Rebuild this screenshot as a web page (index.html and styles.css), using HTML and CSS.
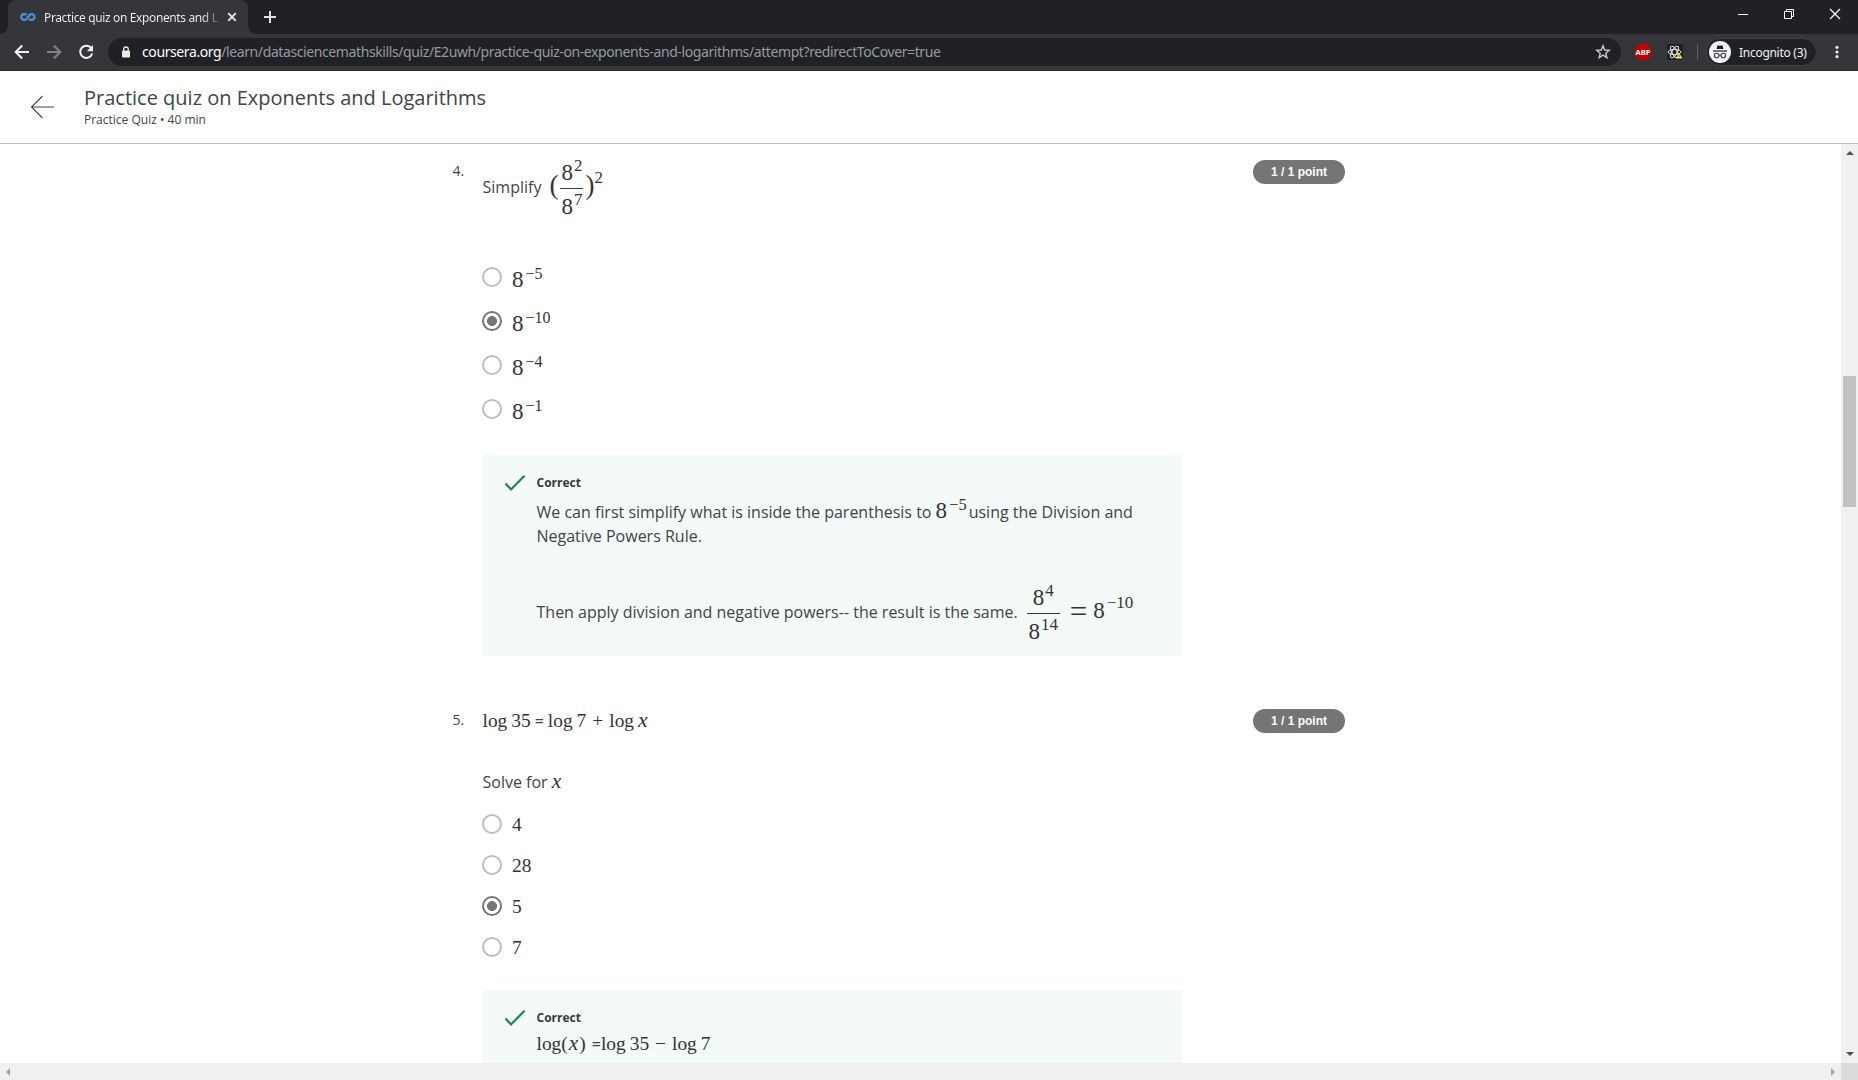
FILE: index.html
```html
<!DOCTYPE html>
<html lang="en">
<head>
<meta charset="utf-8">
<title>Practice quiz on Exponents and Logarithms</title>
<link rel="stylesheet" href="styles.css">
</head>
<body>
<div class="tabstrip">
  <div class="tab">
    <svg class="favicon" width="16" height="10" viewBox="0 0 16 10"><path d="M6.500 3A3 3 0 1 0 6.500 7L9.300 3.200A2.900 2.900 0 1 1 9.200 6.700" fill="none" stroke="#4a90d0" stroke-width="2.400"/></svg>
    <span class="tab-title">Practice quiz on Exponents and L</span>
    <svg class="tab-close" width="10" height="10" viewBox="0 0 10 10"><path d="M1.2 1.2l7.6 7.6M8.8 1.2L1.2 8.8" stroke="#e8eaed" stroke-width="1.8"/></svg>
  </div>
  <svg class="new-tab" width="14" height="14" viewBox="0 0 14 14"><path d="M7 1v12M1 7h12" stroke="#dfe1e5" stroke-width="2"/></svg>
  <div class="window-controls">
    <svg width="12" height="12" viewBox="0 0 12 12"><path d="M1 6.5h10" stroke="#fff"/></svg>
    <svg width="12" height="12" viewBox="0 0 12 12"><path d="M1.5 3.5h7v7h-7zM3.5 3.500v-2h7v7h-2" fill="none" stroke="#fff"/></svg>
    <svg width="12" height="12" viewBox="0 0 12 12"><path d="M1 1l10 10M11 1L1 11" stroke="#fff" stroke-width="1.2"/></svg>
  </div>
</div>
<div class="toolbar">
  <div class="nav">
    <svg width="16" height="16" viewBox="0 0 16 16"><path d="M15 8H2M8.200 1.500L1.700 8l6.500 6.500" fill="none" stroke="#f1f3f4" stroke-width="2"/></svg>
    <svg width="16" height="16" viewBox="0 0 16 16"><path d="M1 8h13M7.800 1.500L14.300 8l-6.500 6.500" fill="none" stroke="#838488" stroke-width="2"/></svg>
    <svg width="16" height="16" viewBox="0 0 16 16"><path d="M13.300 4.200A6.100 6.100 0 1 0 14.200 9.500" fill="none" stroke="#f1f3f4" stroke-width="2"/><path d="M15 1v6.200H8.800z" fill="#f1f3f4"/></svg>
  </div>
  <div class="omnibox">
    <svg width="10" height="12" viewBox="0 0 10 12"><rect x="1" y="4.500" width="8" height="7" rx="1" fill="#e8eaed"/><path d="M2.700 5V3.300a2.300 2.300 0 0 1 4.600 0V5" fill="none" stroke="#e8eaed" stroke-width="1.300"/></svg>
    <span class="url"><span class="host">coursera.org</span><span class="path">/learn/datasciencemathskills/quiz/E2uwh/practice-quiz-on-exponents-and-logarithms/attempt?redirectToCover=true</span></span>
    <svg class="star" width="16" height="16" viewBox="0 0 16 16"><path d="M8 1.700l1.700 4.300 4.600.3-3.500 2.900 1.100 4.500L8 11.200l-3.900 2.500 1.100-4.500L1.700 6.300l4.600-.3z" fill="none" stroke="#c6c8cb" stroke-width="1.400"/></svg>
  </div>
  <div class="abp"><span>ABP</span></div>
  <svg class="react" width="16" height="16" viewBox="0 0 16 16"><path d="M0 0h16v16H0z" fill="#202124"/><g fill="none" stroke="#e8e8e8"><ellipse cx="7.500" cy="8" rx="6.500" ry="2.500"/><ellipse cx="7.500" cy="8" rx="6.500" ry="2.500" transform="rotate(60 7.500 8)"/><ellipse cx="7.500" cy="8" rx="6.500" ry="2.500" transform="rotate(120 7.500 8)"/></g><path d="M12 8.500l3.500 6h-6.500z" fill="#f6e94b"/><path d="M12.200 10.800v2.200" stroke="#554d00" stroke-width=".8"/></svg>
  <div class="divider"></div>
  <div class="incognito">
    <svg width="22" height="22" viewBox="0 0 22 22"><circle cx="11" cy="11" r="11" fill="#f1f3f4"/><path d="M7.500 8l1.100-3.700 2.400.4 2.400-.4L14.500 8z" fill="#202124"/><path d="M4 10h14" stroke="#202124" stroke-width="1.200"/><g fill="none" stroke="#3c4043" stroke-width="1.100"><circle cx="7.700" cy="14.500" r="2.300"/><circle cx="14.300" cy="14.500" r="2.300"/><path d="M10 14.200h2"/></g></svg>
    <span>Incognito (3)</span>
  </div>
  <svg class="menu" width="4" height="14" viewBox="0 0 4 14"><g fill="#e8eaed"><circle cx="2" cy="2.300" r="1.600"/><circle cx="2" cy="7" r="1.600"/><circle cx="2" cy="11.700" r="1.600"/></g></svg>
</div>
<header class="quiz-header">
  <svg width="25" height="24" viewBox="0 0 25 24"><path d="M24 12H1.500M12.500 1L1.500 12l11 11" fill="none" stroke="#444" stroke-width="1.100"/></svg>
  <div>
    <h1>Practice quiz on Exponents and Logarithms</h1>
    <p>Practice Quiz • 40 min</p>
  </div>
</header>
<div class="viewport">
  <main>
    <section class="question q4">
      <div class="number">4.</div>
      <div class="body">
        <p class="prompt"><span class="word-simplify">Simplify</span><span class="m paren">(</span><span class="m frac"><span class="num">8<sup>2</sup></span><span class="den">8<sup>7</sup></span></span><span class="m paren close">)</span><span class="m big"><sup>2</sup></span></p>
        <div class="options powers">
          <div class="option"><i class="radio"></i><span class="m big">8<sup>−5</sup></span></div>
          <div class="option"><i class="radio on"></i><span class="m big">8<sup>−10</sup></span></div>
          <div class="option"><i class="radio"></i><span class="m big">8<sup>−4</sup></span></div>
          <div class="option"><i class="radio"></i><span class="m big">8<sup>−1</sup></span></div>
        </div>
        <div class="feedback">
          <svg width="22" height="18" viewBox="0 0 22 18"><path d="M1.500 9.500l5.500 6L20.500 1.800" fill="none" stroke="#1f8354" stroke-width="2.200"/></svg>
          <div class="explain">
            <h2>Correct</h2>
            <p class="line1"><span class="lead">We can first simplify what is inside the parenthesis to </span><span class="m big inline">8<sup>−5</sup></span><span class="tail">using the Division and</span><br>Negative Powers Rule.</p>
            <p class="line2"><span class="lead2">Then apply division and negative powers-- the result is the same.</span><span class="m frac wide"><span class="num">8<sup>4</sup></span><span class="den">8<sup>14</sup></span></span><span class="m equals">=</span><span class="m big result">8<sup>−10</sup></span></p>
          </div>
        </div>
      </div>
      <div class="points">1 / 1 point</div>
    </section>
    <section class="question q5">
      <div class="number">5.</div>
      <div class="body">
        <p class="equation"><span class="m">log<span class="thin">35</span></span><span class="eq">=</span><span class="m">log<span class="thin">7</span><span class="op plus">+</span>log<em>x</em></span></p>
        <p class="solve">Solve for <span class="m"><em class="bare">x</em></span></p>
        <div class="options">
          <div class="option"><i class="radio"></i><span class="m">4</span></div>
          <div class="option"><i class="radio"></i><span class="m">28</span></div>
          <div class="option"><i class="radio on"></i><span class="m">5</span></div>
          <div class="option"><i class="radio"></i><span class="m">7</span></div>
        </div>
        <div class="feedback">
          <svg width="22" height="18" viewBox="0 0 22 18"><path d="M1.500 9.500l5.500 6L20.500 1.800" fill="none" stroke="#1f8354" stroke-width="2.200"/></svg>
          <div class="explain">
            <h2>Correct</h2>
            <p class="logline"><span class="m">log(<em class="arg">x</em>)</span><span class="eq tight">=</span><span class="m">log<span class="thin">35</span><span class="op">−</span>log<span class="thin">7</span></span></p>
          </div>
        </div>
      </div>
      <div class="points">1 / 1 point</div>
    </section>
  </main>
  <div class="vscroll">
    <svg width="8" height="4" viewBox="0 0 8 4"><path d="M0 4l4-4 4 4z" fill="#505050"/></svg>
    <div class="thumb"></div>
    <svg width="8" height="4" viewBox="0 0 8 4"><path d="M0 0h8L4 4z" fill="#505050"/></svg>
  </div>
</div>
<div class="hscroll">
  <svg width="4" height="8" viewBox="0 0 4 8"><path d="M4 0v8L0 4z" fill="#a3a3a3"/></svg>
  <svg width="4" height="8" viewBox="0 0 4 8"><path d="M0 0v8l4-4z" fill="#a3a3a3"/></svg>
  <div class="corner"></div>
</div>
</body>
</html>
```
FILE: styles.css
```css
* { box-sizing: border-box; }
body {
  margin: 0;
  width: 1858px;
  height: 1080px;
  overflow: hidden;
  display: flex;
  flex-direction: column;
  background: #fff;
  color: #414446;
  font-family: "Open Sans", "Noto Sans", sans-serif;
}
h1, h2, p { margin: 0; font-weight: 400; }
svg { display: block; flex: none; }

/* Browser tab strip */
.tabstrip {
  flex: none;
  height: 34px;
  background: #202124;
  display: flex;
  align-items: center;
  padding-left: 8px;
}
.tab {
  position: relative;
  width: 240px;
  height: 34px;
  background: #35363a;
  border-radius: 8px 8px 0 0;
  display: flex;
  align-items: center;
  padding: 0 11px 0 12px;
}
.tab::before, .tab::after {
  content: "";
  position: absolute;
  bottom: 0;
  width: 8px;
  height: 8px;
}
.tab::before { left: -8px; background: radial-gradient(circle at 0 0, #202124 7.5px, #35363a 8px); }
.tab::after { right: -8px; background: radial-gradient(circle at 100% 0, #202124 7.5px, #35363a 8px); }
.tab-title {
  margin-left: 8px;
  margin-right: auto;
  white-space: nowrap;
  font-family: "Noto Sans", sans-serif;
  font-size: 12px;
  letter-spacing: -0.37px;
  color: transparent;
  background: linear-gradient(90deg, #f1f3f4 158px, #f1f3f420 176px);
  -webkit-background-clip: text;
  background-clip: text;
}
.new-tab { margin-left: 15px; }
.window-controls {
  margin-left: auto;
  display: flex;
  gap: 34px;
  padding: 0 17px 6px 0;
}

/* Browser toolbar */
.toolbar {
  flex: none;
  height: 37px;
  background: #35363a;
  border-bottom: 1px solid #28292c;
  display: flex;
  align-items: center;
  font-family: "Noto Sans", sans-serif;
}
.nav { display: flex; gap: 16px; padding: 0 14px; }
.omnibox {
  width: 1513px;
  height: 28px;
  border-radius: 14px;
  background: #202124;
  display: flex;
  align-items: center;
  padding: 0 10px 0 13px;
}
.url {
  margin-left: 11px;
  font-size: 14px;
  line-height: 20px;
  white-space: nowrap;
  color: #969ba1;
}
.host { color: #fff; letter-spacing: -0.4px; }
.path { letter-spacing: -0.4px; }
.star { margin-left: auto; }
.abp {
  width: 16px;
  height: 16px;
  margin-left: 14px;
  background: #c80000;
  clip-path: polygon(30% 0, 70% 0, 100% 30%, 100% 70%, 70% 100%, 30% 100%, 0 70%, 0 30%);
  color: #fff;
  display: flex;
  align-items: center;
  justify-content: center;
  font: 700 7.5px "Open Sans", sans-serif;
}
.react { margin-left: 16px; }
.divider { width: 1px; height: 16px; margin-left: 14px; background: #5f6064; }
.incognito {
  width: 111px;
  height: 28px;
  margin-left: 8px;
  border: 1px solid #3f4044;
  border-radius: 14px;
  background: #202124;
  display: flex;
  align-items: center;
  padding-left: 2px;
  color: #f1f3f4;
  font-size: 12px;
  letter-spacing: -0.28px;
  white-space: nowrap;
}
.incognito span { margin-left: 8px; }
.menu { margin-left: 18px; }

/* Quiz header */
.quiz-header {
  flex: none;
  height: 73px;
  border-bottom: 1px solid #bdbdbd;
  display: flex;
  align-items: center;
  gap: 29px;
  padding-left: 30px;
}
.quiz-header h1 { font-size: 20px; line-height: 27px; white-space: nowrap; }
.quiz-header p { font-size: 12px; line-height: 17px; padding-bottom: 2px; }

/* Scrolled page area */
.viewport { flex: none; height: 919px; display: flex; overflow: hidden; }
main { width: 1841px; height: 919px; overflow: hidden; padding: 16px 0 0 452.500px; }
.question {
  display: grid;
  grid-template-columns: 30px 701px 92px;
  column-gap: 0;
}
.number { font-size: 14px; line-height: 22px; }
.points {
  margin-left: 69.500px;
  width: 92px;
  height: 24px;
  border-radius: 12px;
  background: #757575;
  color: #fff;
  font: 700 12px/24px "Liberation Sans", Arial, sans-serif;
  text-align: center;
}
.body p { font-size: 16px; line-height: 24px; white-space: nowrap; }

/* Math */
.m { font-family: "Liberation Serif", serif; font-size: 19.4px; line-height: 0; color: #333; }
.m em { margin-left: 4px; font-size: 21.500px; line-height: 0; }
.m em.bare { margin-left: 0; }
.m .thin { margin-left: 4px; }
.m .op { margin: 0 6px; }
.m .op.plus { margin: 0 6px; }
.m sup { font-size: 17px; line-height: 0; vertical-align: 9px; margin-left: 1px; }
.m.big { font-size: 23px; }
.m.frac {
  display: inline-flex;
  flex-direction: column;
  vertical-align: middle;
  width: 23px;
  height: 57px;
  font-size: 23px;
  text-align: center;
}
.frac .num { height: 29px; line-height: 25px; border-bottom: 1px solid #373a3c; }
.frac .den { height: 28px; line-height: 35px; }
.frac.wide { width: 33px; margin-left: 9px; }
.m.paren { font-size: 27px; vertical-align: -1px; margin: 0 2px 0 8px; }
.m.paren.close { margin: 0 0 0 2px; }
.prompt .m.big sup { vertical-align: 10px; margin-left: 0; }
.m.equals { font-size: 31px; vertical-align: -4px; margin: 0 6px 0 10px; }
.m.result sup { margin-left: 2px; vertical-align: 10px; }

/* Answer options */
.options { display: flex; flex-direction: column; margin-left: -.5px; }
.option { height: 41px; display: flex; align-items: center; gap: 10px; }
.option .m { line-height: 26px; padding-top: 3px; }
.radio {
  width: 20px;
  height: 20px;
  border: 2px solid #bdbdbd;
  border-radius: 50%;
}
.radio.on {
  border-color: #757575;
  background: radial-gradient(circle, #757575 4.7px, #fff 5.2px);
}
.powers .option .m { padding-top: 6px; }
.powers .option { height: 44px; }
.powers sup { font-size: 16px; vertical-align: 8px; margin-left: 2px; }

/* Feedback panels */
.feedback {
  width: 700px;
  margin-left: .5px;
  background: #f4faf8;
  display: flex;
  gap: 10.500px;
  padding: 18px 0 0 21px;
}
.feedback svg { margin-top: 1px; }
.feedback h2 { font-size: 12px; font-weight: 700; line-height: 20px; color: #373a3c; }

.q4 { height: 549px; }
.q4 .prompt { height: 95px; }
.q4 .feedback { height: 201px; margin-top: 24px; }
.q4 .line1 { margin-top: 7px; }
.q4 .line2 { margin-top: 37px; }
.line1 .tail { margin-left: 2px; }
.line1 .m sup { vertical-align: 8px; font-size: 16.500px; margin-left: 2px; }
.q5 .equation { height: 24px; }
.q5 .solve { margin-top: 37px; }
.q5 .options { margin-top: 9px; }
.q5 .feedback { height: 201px; margin-top: 23px; }
.q5 .logline { margin-top: 4px; }
.q5 .eq { margin: 0 4px; }
.q5 .eq.tight { margin: 0 0 0 6px; }
.m em.arg { margin: 0 1px; }

/* Scrollbars */
.vscroll {
  width: 17px;
  background: #f0f0f0;
  display: flex;
  flex-direction: column;
  align-items: center;
  padding: 7px 0 7px;
}
.vscroll .thumb { width: 13px; height: 131px; margin-top: 221px; margin-bottom: auto; background: #c1c1c1; }
.hscroll {
  flex: none;
  height: 17px;
  background: #f0f0f0;
  display: flex;
  align-items: center;
  padding-left: 6px;
}
.hscroll svg + svg { margin-left: auto; margin-right: 6px; }
.corner { width: 17px; height: 17px; background: #dcdcdc; }
```
